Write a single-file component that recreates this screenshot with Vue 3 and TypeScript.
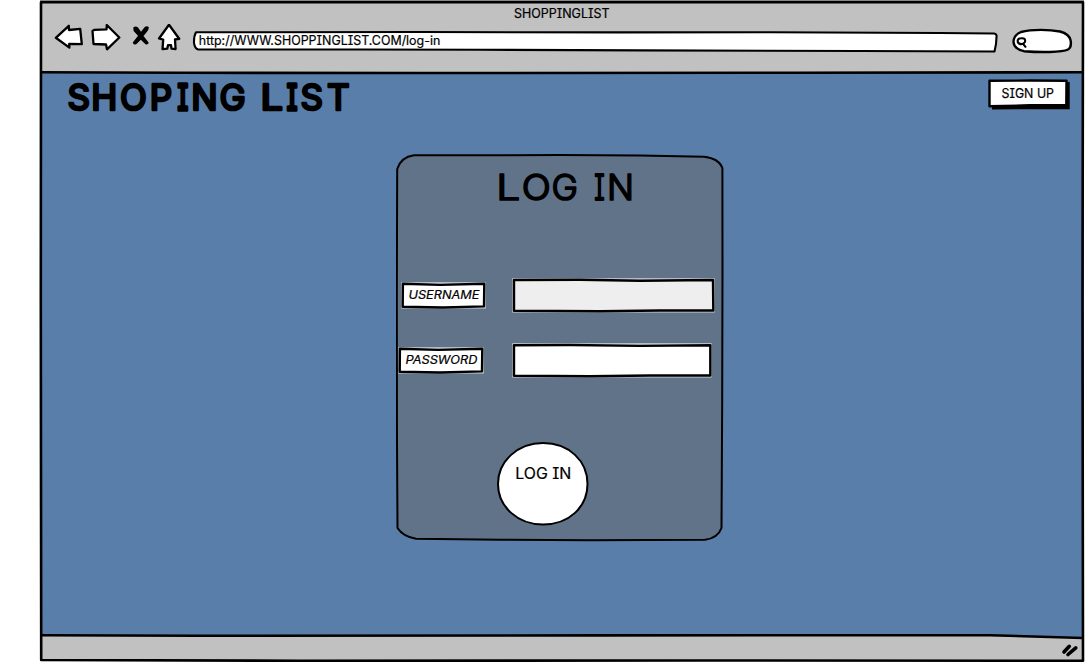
<script setup lang="ts">
interface Field {
  name: string
  label: string
  labelBox: string
  labelEdge: string
  labelPath: string
  labelX: number
  labelWidth: number
  baseline: number
  inputBox: string
  inputEdge: string
  inputPath: string
  fill: string
}

interface Run {
  text: string
  x: string
  width?: number
}

const brand: Run[] = [
  { text: 'SHOP', x: '67.4 91.2 120 149.8' },
  { text: 'I', x: '177.6', width: 10.6 },
  { text: 'NG ', x: '191.2 219.6 250' },
  { text: 'L', x: '260.6', width: 22.5 },
  { text: 'I', x: '286.8', width: 10.6 },
  { text: 'ST', x: '300.5 327' },
]

const heading: Run[] = [
  { text: 'L', x: '496.2', width: 24 },
  { text: 'O', x: '521.8', width: 29 },
  { text: 'G ', x: '551.6 580' },
  { text: 'I', x: '594.2', width: 10.4 },
  { text: 'N', x: '607' },
]

const fields: Field[] = [
  {
    name: 'username',
    label: 'USERNAME',
    labelBox: '396 277 100 38',
    labelEdge: 'M401.3 282.3 H485.8 V308.6 H401.3 Z',
    labelPath: 'M402.9 283.8 L440 284.9 L484.3 283.8 L484 306.4 L443 307.5 L402.7 306.8 Z',
    labelX: 408.5,
    labelWidth: 71,
    baseline: 299,
    inputBox: '496 277 228 38',
    inputEdge: 'M512.3 278.3 H714.6 V312.6 H512.3 Z',
    inputPath: 'M514 280 L580 279.7 L640 280.7 L713 280 L713.3 310.5 L660 310.5 L600 311.3 L514 310.7 Z',
    fill: '#eeeeee',
  },
  {
    name: 'password',
    label: 'PASSWORD',
    labelBox: '396 342 100 38',
    labelEdge: 'M398.3 347.3 H483.8 V373.6 H398.3 Z',
    labelPath: 'M399.9 348.8 L438 349.9 L482.3 348.8 L482 371.4 L440 372.5 L399.7 371.8 Z',
    labelX: 405.5,
    labelWidth: 72,
    baseline: 364,
    inputBox: '496 342 228 38',
    inputEdge: 'M512.3 343.3 H711.6 V377.6 H512.3 Z',
    inputPath: 'M514 345.3 L570 345 L640 345.9 L710.3 345.3 L710.3 375.5 L650 375.5 L590 376.3 L514 375.7 Z',
    fill: '#ffffff',
  },
]
</script>

<template>
  <div class="page">
    <div class="window">
      <header class="chrome">
        <svg class="tab-title" viewBox="39 0 1046 24">
          <text x="514" y="17.5" font-size="12.4" textLength="95.5" lengthAdjust="spacingAndGlyphs">SHOPPINGLIST</text>
        </svg>
        <nav class="toolbar">
          <svg class="nav-icons" viewBox="39 24 150 48">
            <path class="icon" d="M55.8 37.8 L68.8 25.8 L69 30 L80.2 28.9 L81.8 44.2 L69.2 44 L69.4 47.6 Z" />
            <path class="icon" d="M92.5 31 L94.5 29.8 L106.5 29.3 L106.8 25 L119.3 37.5 L107 49.3 L106 44.5 L93.5 44 Z" />
            <path class="cross" d="M133.3 27.6 Q135.5 25.4 138 27.5 L141 31.7 L144.5 27.2 Q147 25.2 148.9 27.3 Q149 30 146 33 L143.5 36 L148.6 42.6 Q148.7 45 145.5 44.2 L140.8 39.8 L136.5 44 Q133.3 45.5 132.8 42.6 L138 35.8 L133.6 31 Z" />
            <path class="icon" d="M159 38.5 L169 24.8 L179.2 38.8 L175 39.5 L175.6 49 L171.5 48.6 L171 45.2 L168 45.2 L167.3 48.6 L162.5 49.2 L163.2 39.6 Z" />
          </svg>
          <svg class="address" viewBox="189 24 814 48">
            <path class="box address-box" d="M196 32.3 L420 32 L620 32.4 L770 32.2 L940 33 L994 33.5 Q997 34 996.5 37 Q996.5 44 994.5 51.5 L860 51 L640 50.4 L480 49.8 L360 49.5 L198 49.4 Q195 49 194 43 Q193.8 36 196 32.3 Z" />
            <text x="198.8" y="45" font-size="12.7" textLength="241.5" lengthAdjust="spacingAndGlyphs">http://WWW.SHOPPINGLIST.COM/log-in</text>
          </svg>
          <svg class="search" viewBox="1003 24 82 48">
            <path class="box" d="M1021 32 C1032 29 1050 29.5 1060 31.5 Q1069 34 1070.5 40 Q1072 47 1068 49.5 C1062 52.5 1040 52.5 1024 51.2 Q1014 49 1013.5 42 Q1013.5 35 1021 32 Z" />
            <path class="lens" d="M1021 38.3 C1024.5 37.8 1026 39.5 1024.8 42.3 C1023.3 44.6 1019 45 1017.8 42 C1017.3 39.5 1018.5 38.4 1021 38.3 Z M1023.5 44.3 L1025.5 46.8" />
          </svg>
        </nav>
      </header>

      <main class="content">
        <div class="topline">
          <svg class="brand" role="heading" viewBox="61 72 300 46">
            <text y="109.8" font-size="35"><tspan v-for="(run, i) in brand" :key="i" :class="{ bar: run.text === 'I' }" :x="run.x" :textLength="run.width" lengthAdjust="spacingAndGlyphs">{{ run.text }}</tspan></text>
          </svg>
          <svg class="signup" role="button" viewBox="985 72 90 46">
            <path d="M992 83 L1069.7 82 L1069.7 109.2 L992 109.4 Z" />
            <path class="box" d="M989.5 80.8 L1030 80.5 L1066.5 80.8 L1066.3 105 L1030 105.3 L989.5 106.3 Z" />
            <text x="1001.5" y="98" font-size="13" textLength="52.5" lengthAdjust="spacingAndGlyphs">SIGN UP</text>
          </svg>
        </div>

        <form class="card" @submit.prevent>
          <svg class="card-outline" viewBox="396 154 328 388">
            <path d="M397.2 169 Q401 157 414 155.3 L500 155.2 L560 155 L640 155.5 L704 156.8 Q719 158.5 722.4 168 L722.5 270 L722.2 400 L721.5 528 Q718 538 705 539.8 L590 540.3 L500 539.8 L416 538.8 Q403 536.5 397.5 528 L397 440 L396.8 300 Z" />
          </svg>
          <svg class="heading" role="heading" viewBox="396 154 328 123">
            <text y="199.8" font-size="35.6"><tspan v-for="(run, i) in heading" :key="i" :class="{ bar: run.text === 'I' }" :x="run.x" :textLength="run.width" lengthAdjust="spacingAndGlyphs">{{ run.text }}</tspan></text>
          </svg>
          <div v-for="field in fields" :key="field.name" class="row">
            <svg class="label" :viewBox="field.labelBox">
              <path class="edge" :d="field.labelEdge" />
              <path class="box" :d="field.labelPath" />
              <text :x="field.labelX" :y="field.baseline" font-size="11.8" :textLength="field.labelWidth" lengthAdjust="spacingAndGlyphs">{{ field.label }}</text>
            </svg>
            <svg class="input" :viewBox="field.inputBox">
              <path class="edge" :d="field.inputEdge" />
              <path class="box" :fill="field.fill" :d="field.inputPath" />
            </svg>
          </div>
          <svg class="submit" role="button" viewBox="496 440 94 88">
            <path d="M543 443 C569 443 587.5 461 587.5 484 C587.5 507 569 524.5 543 524.5 C518 524.5 498 507 498 484 C498 461 518 443 543 443 Z" />
            <text x="515.3" y="479" font-size="15.6" textLength="56" lengthAdjust="spacingAndGlyphs">LOG IN</text>
          </svg>
        </form>
      </main>

      <footer class="status">
        <svg class="grip" viewBox="1055 635 30 28">
          <path d="M1065 652 L1070.3 646.3 M1069 654.5 L1076.8 647.8" />
        </svg>
      </footer>

      <svg class="frame" viewBox="39 0 1046 663">
        <path class="slope" d="M985 634 H1083 V638 Z" />
        <path class="faint" d="M40 .8 H1084" />
        <path d="M41 2.3 L600 2.3 L1083 2.3 L1082.5 300 L1083 660.8 L700 660.5 L300 660.8 L41.2 660 L40.8 300 Z" />
        <path d="M41 72.2 L180 72.8 L420 73 L800 72.8 L1083 72.2" />
        <path d="M41 635.3 L200 635.8 L600 635.4 L990 635.2 L1083 638" />
      </svg>
    </div>
  </div>
</template>

<style>
body {
  margin: 0;
  background: #fff;
}
</style>

<style scoped>
.page {
  width: 1085px;
  height: 663px;
  padding-left: 39px;
  box-sizing: border-box;
  overflow: hidden;
  background: #fff;
}
.window {
  position: relative;
  display: flex;
  flex-direction: column;
  width: 1046px;
  height: 663px;
}
svg {
  display: block;
  flex: none;
}
text {
  font-family: Inter, 'Liberation Sans', sans-serif;
  font-feature-settings: 'cv08' 1;
  fill: #000;
  stroke: #000;
  stroke-width: 0.2;
  white-space: pre;
}
.chrome,
.status {
  width: 1043px;
  margin-left: 2px;
  background: #c1c1c1;
}
.chrome {
  height: 70px;
  margin-top: 2px;
}
.tab-title,
.toolbar {
  margin-left: -2px;
}
.tab-title {
  width: 1046px;
  height: 24px;
  margin-top: -2px;
}
.toolbar {
  display: flex;
  width: 1046px;
}
.nav-icons {
  width: 150px;
  height: 48px;
}
.address {
  width: 814px;
  height: 48px;
}
.search {
  width: 82px;
  height: 48px;
}
.icon,
.box {
  stroke: #000;
  stroke-linejoin: round;
}
.icon {
  fill: #fff;
  stroke-width: 2.3;
}
.box {
  stroke-width: 2.4;
}
.box:not([fill]) {
  fill: #fff;
}
.edge {
  fill: #fff;
  fill-opacity: 0.7;
}
.address-box {
  stroke-width: 2.1;
}
.cross {
  fill: #000;
}
.lens {
  fill: none;
  stroke: #000;
  stroke-width: 2.1;
  stroke-linecap: round;
}
.chrome {
  display: flow-root;
}
.content {
  width: 1043px;
  height: 563px;
  margin-left: 2px;
  background: #5a7eaa;
}
.topline {
  display: flex;
  justify-content: space-between;
  padding: 0 9px 0 20px;
}
.brand {
  width: 300px;
  height: 46px;
}
.brand text {
  font-weight: 400;
  stroke-width: 2.6;
  stroke-linejoin: round;
}
.brand .bar {
  stroke-width: 3.6;
}
.signup {
  width: 90px;
  height: 46px;
}
.card {
  position: relative;
  display: flex;
  flex-direction: column;
  width: 328px;
  height: 388px;
  margin: 36px 0 0 355px;
}
.card-outline {
  position: absolute;
  inset: 0;
  width: 328px;
  height: 388px;
}
.card-outline path {
  fill: #617389;
  stroke: #000;
  stroke-width: 2;
  stroke-linejoin: round;
}
.heading {
  position: relative;
  width: 328px;
  height: 123px;
}
.heading text {
  font-weight: 300;
  stroke-width: 1.7;
  stroke-linejoin: round;
}
.heading .bar {
  stroke-width: 2.2;
}
.row {
  position: relative;
  display: flex;
  height: 38px;
  margin-bottom: 27px;
}
.label {
  width: 100px;
  height: 38px;
}
.label text {
  font-style: italic;
}
.input {
  width: 228px;
  height: 38px;
}
.submit {
  position: relative;
  width: 94px;
  height: 88px;
  margin: 33px 0 0 100px;
}
.submit path {
  fill: #fff;
  stroke: #000;
  stroke-width: 2;
}
.status {
  display: flex;
  justify-content: flex-end;
  height: 26px;
}
.grip {
  width: 30px;
  height: 28px;
}
.grip path {
  fill: none;
  stroke: #000;
  stroke-width: 3.6;
  stroke-linecap: round;
}
.frame {
  position: absolute;
  inset: 0;
  width: 1046px;
  height: 663px;
  pointer-events: none;
}
.frame path {
  fill: none;
  stroke: #000;
  stroke-width: 2.6;
  stroke-linejoin: round;
}
.frame .slope {
  fill: #5a7eaa;
  stroke: none;
}
.frame .faint {
  stroke: #555;
  stroke-width: 1;
}
</style>
